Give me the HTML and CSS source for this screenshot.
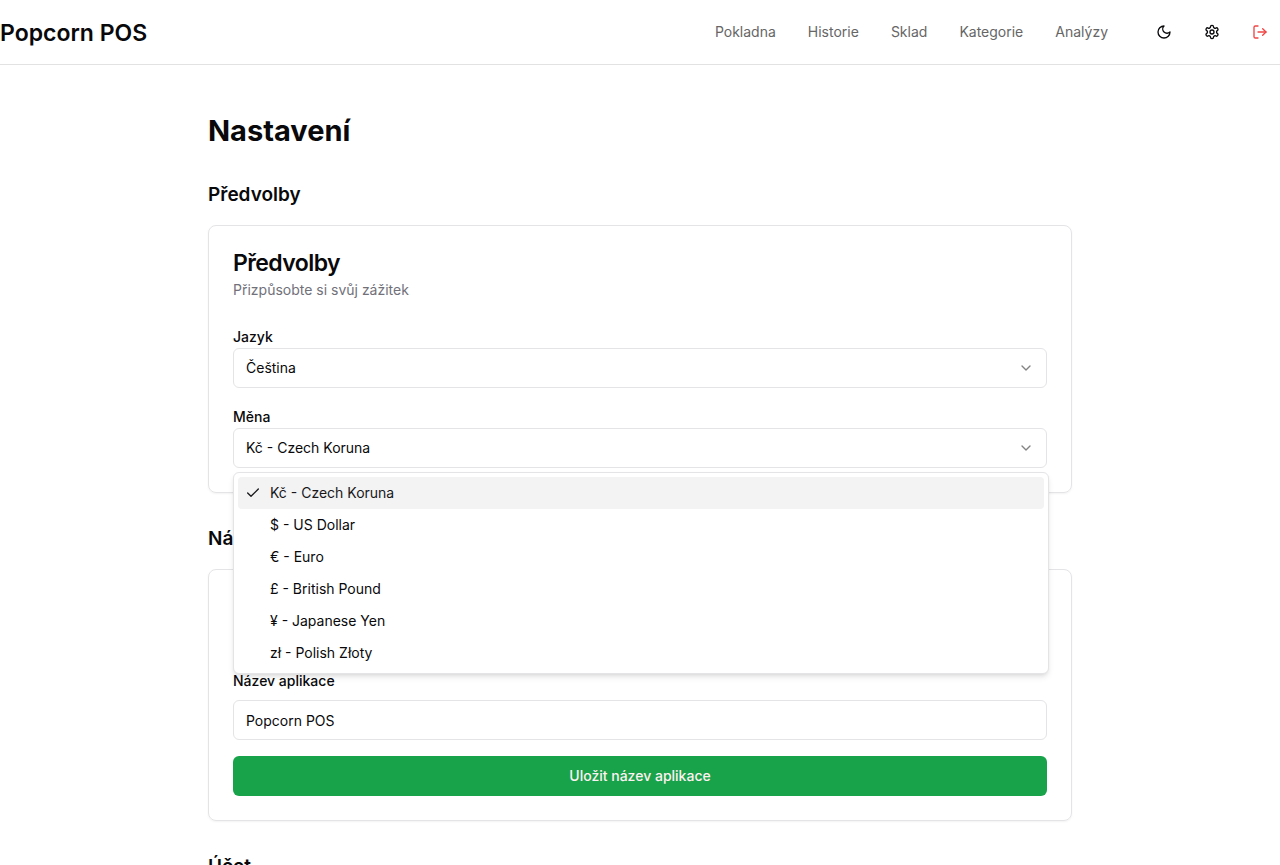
FILE: index.html
```html
<!DOCTYPE html>
<html lang="cs">
<head>
<meta charset="utf-8">
<meta name="viewport" content="width=device-width, initial-scale=1">
<title>Popcorn POS</title>
<link rel="stylesheet" href="styles.css">
</head>
<body>
<header class="topbar">
  <a class="brand" href="#">Popcorn POS</a>
  <div class="topbar-end">
    <nav class="nav">
      <a href="#">Pokladna</a>
      <a href="#">Historie</a>
      <a href="#">Sklad</a>
      <a href="#">Kategorie</a>
      <a href="#">Analýzy</a>
    </nav>
    <div class="actions">
      <button class="icon-button" type="button" aria-label="Tmavý režim">
        <svg class="icon" viewBox="0 0 24 24"><path d="M12 3a6 6 0 0 0 9 9 9 9 0 1 1-9-9Z"/></svg>
      </button>
      <button class="icon-button" type="button" aria-label="Nastavení">
        <svg class="icon" viewBox="0 0 24 24"><path d="M12.22 2h-.44a2 2 0 0 0-2 2v.18a2 2 0 0 1-1 1.73l-.43.25a2 2 0 0 1-2 0l-.15-.08a2 2 0 0 0-2.73.73l-.22.38a2 2 0 0 0 .73 2.73l.15.1a2 2 0 0 1 1 1.72v.51a2 2 0 0 1-1 1.74l-.15.09a2 2 0 0 0-.73 2.73l.22.38a2 2 0 0 0 2.73.73l.15-.08a2 2 0 0 1 2 0l.43.25a2 2 0 0 1 1 1.73V20a2 2 0 0 0 2 2h.44a2 2 0 0 0 2-2v-.18a2 2 0 0 1 1-1.73l.43-.25a2 2 0 0 1 2 0l.15.08a2 2 0 0 0 2.73-.73l.22-.39a2 2 0 0 0-.73-2.73l-.15-.08a2 2 0 0 1-1-1.74v-.5a2 2 0 0 1 1-1.74l.15-.09a2 2 0 0 0 .73-2.73l-.22-.38a2 2 0 0 0-2.73-.73l-.15.08a2 2 0 0 1-2 0l-.43-.25a2 2 0 0 1-1-1.73V4a2 2 0 0 0-2-2z"/><circle cx="12" cy="12" r="3"/></svg>
      </button>
      <button class="icon-button danger" type="button" aria-label="Odhlásit se">
        <svg class="icon" viewBox="0 0 24 24"><path d="M9 21H5a2 2 0 0 1-2-2V5a2 2 0 0 1 2-2h4"/><path d="m16 17 5-5-5-5"/><path d="M21 12H9"/></svg>
      </button>
    </div>
  </div>
</header>

<main class="page">
  <h1 class="page-title">Nastavení</h1>

  <section class="section">
    <h2 class="section-title">Předvolby</h2>
    <div class="card">
      <div class="card-header">
        <h3 class="card-title">Předvolby</h3>
        <p class="card-description">Přizpůsobte si svůj zážitek</p>
      </div>
      <div class="card-body">
        <div class="field">
          <label class="label" for="language">Jazyk</label>
          <div class="select">
            <select class="control" id="language"><option>Čeština</option></select>
            <svg class="icon chevron" viewBox="0 0 24 24"><path d="m6 9 6 6 6-6"/></svg>
          </div>
        </div>
        <div class="field">
          <label class="label" for="currency">Měna</label>
          <div class="select">
            <select class="control" id="currency"><option>Kč - Czech Koruna</option></select>
            <svg class="icon chevron" viewBox="0 0 24 24"><path d="m6 9 6 6 6-6"/></svg>
            <ul class="menu" role="listbox" aria-label="Měna">
              <li class="option selected" role="option" aria-selected="true"><svg class="icon" viewBox="0 0 24 24"><path d="M20 6 9 17l-5-5"/></svg>Kč - Czech Koruna</li>
              <li class="option" role="option">$ - US Dollar</li>
              <li class="option" role="option">€ - Euro</li>
              <li class="option" role="option">£ - British Pound</li>
              <li class="option" role="option">¥ - Japanese Yen</li>
              <li class="option" role="option">zł - Polish Złoty</li>
            </ul>
          </div>
        </div>
      </div>
    </div>
  </section>

  <section class="section">
    <h2 class="section-title">Název aplikace</h2>
    <div class="card">
      <div class="card-header">
        <h3 class="card-title">Název aplikace</h3>
        <p class="card-description">Změňte název aplikace</p>
      </div>
      <form class="card-body">
        <div class="field spaced">
          <label class="label" for="app-name">Název aplikace</label>
          <input class="control" id="app-name" type="text" value="Popcorn POS">
        </div>
        <button class="button" type="button">Uložit název aplikace</button>
      </form>
    </div>
  </section>

  <section class="section">
    <h2 class="section-title">Účet</h2>
  </section>
</main>
</body>
</html>
```
FILE: styles.css
```css
:root {
  --ink: #09090b;
  --muted: #71717a;
  --line: #e4e4e7;
  --green: #18a34a;
}

* {
  box-sizing: border-box;
}

html {
  scrollbar-width: none;
}

body {
  margin: 0;
  background: #fff;
  color: var(--ink);
  font: 400 14px/20px Inter, "Liberation Sans", sans-serif;
}

h1, h2, h3, p, ul {
  margin: 0;
  padding: 0;
}

button, input, select {
  font: inherit;
  color: inherit;
}

.topbar {
  display: flex;
  align-items: center;
  justify-content: space-between;
  min-height: 65px;
  border-bottom: 1px solid #e2e2e2;
}

.brand {
  padding-top: 2px;
  color: inherit;
  font-size: 23px;
  font-weight: 600;
  line-height: 32px;
  text-decoration: none;
}

.topbar-end {
  display: flex;
  align-items: center;
  gap: 36px;
}

.nav {
  display: flex;
  gap: 32px;
}

.nav a {
  color: #666;
  text-decoration: none;
}

.actions {
  display: flex;
  gap: 8px;
}

.icon-button {
  display: flex;
  align-items: center;
  justify-content: center;
  width: 40px;
  height: 40px;
  padding: 0;
  border: 0;
  border-radius: 6px;
  background: none;
}

.danger {
  color: #ef4444;
}

.icon {
  width: 16px;
  height: 16px;
  fill: none;
  stroke: currentColor;
  stroke-width: 2;
  stroke-linecap: round;
  stroke-linejoin: round;
}

.page {
  display: flex;
  flex-direction: column;
  gap: 32px;
  max-width: 896px;
  margin: 0 auto;
  padding: 48px 16px;
}

.page-title {
  font-size: 29px;
  font-weight: 700;
  line-height: 36px;
}

.section {
  display: flex;
  flex-direction: column;
  gap: 16px;
}

.section-title {
  font-size: 19px;
  font-weight: 600;
  line-height: 28px;
}

.card {
  display: flex;
  flex-direction: column;
  gap: 24px;
  padding: 24px;
  border: 1px solid var(--line);
  border-radius: 8px;
  box-shadow: 0 1px 2px rgb(0 0 0 / 5%);
}

.card-header {
  display: flex;
  flex-direction: column;
  gap: 4px;
}

.card-title {
  font-size: 23px;
  font-weight: 600;
  line-height: 26px;
  letter-spacing: -0.025em;
}

.card-description {
  color: var(--muted);
}

.card-body {
  display: flex;
  flex-direction: column;
  gap: 16px;
}

.field {
  display: flex;
  flex-direction: column;
}

.spaced {
  gap: 8px;
}

.label {
  padding-top: 2px;
  font-weight: 500;
  line-height: 22px;
}

.select {
  position: relative;
}

.control {
  display: block;
  width: 100%;
  height: 40px;
  padding: 0 12px;
  border: 1px solid var(--line);
  border-radius: 6px;
  background: #fff;
  appearance: none;
}

.chevron {
  position: absolute;
  top: 12px;
  right: 13px;
  opacity: 0.5;
  pointer-events: none;
}

.menu {
  position: absolute;
  z-index: 10;
  top: 44px;
  left: 0;
  right: -2px;
  padding: 4px;
  border: 1px solid var(--line);
  border-radius: 6px;
  background: #fff;
  box-shadow: 0 4px 6px -1px rgb(0 0 0 / 10%), 0 2px 4px -2px rgb(0 0 0 / 10%);
  list-style: none;
}

.option {
  display: flex;
  align-items: center;
  padding: 6px 8px 6px 32px;
  border-radius: 4px;
}

.selected {
  gap: 9px;
  padding-left: 7px;
  background: #f3f3f3;
  color: #18181b;
}

.button {
  height: 40px;
  border: 0;
  border-radius: 6px;
  background: var(--green);
  color: #fff1f2;
  font-weight: 500;
}
```
